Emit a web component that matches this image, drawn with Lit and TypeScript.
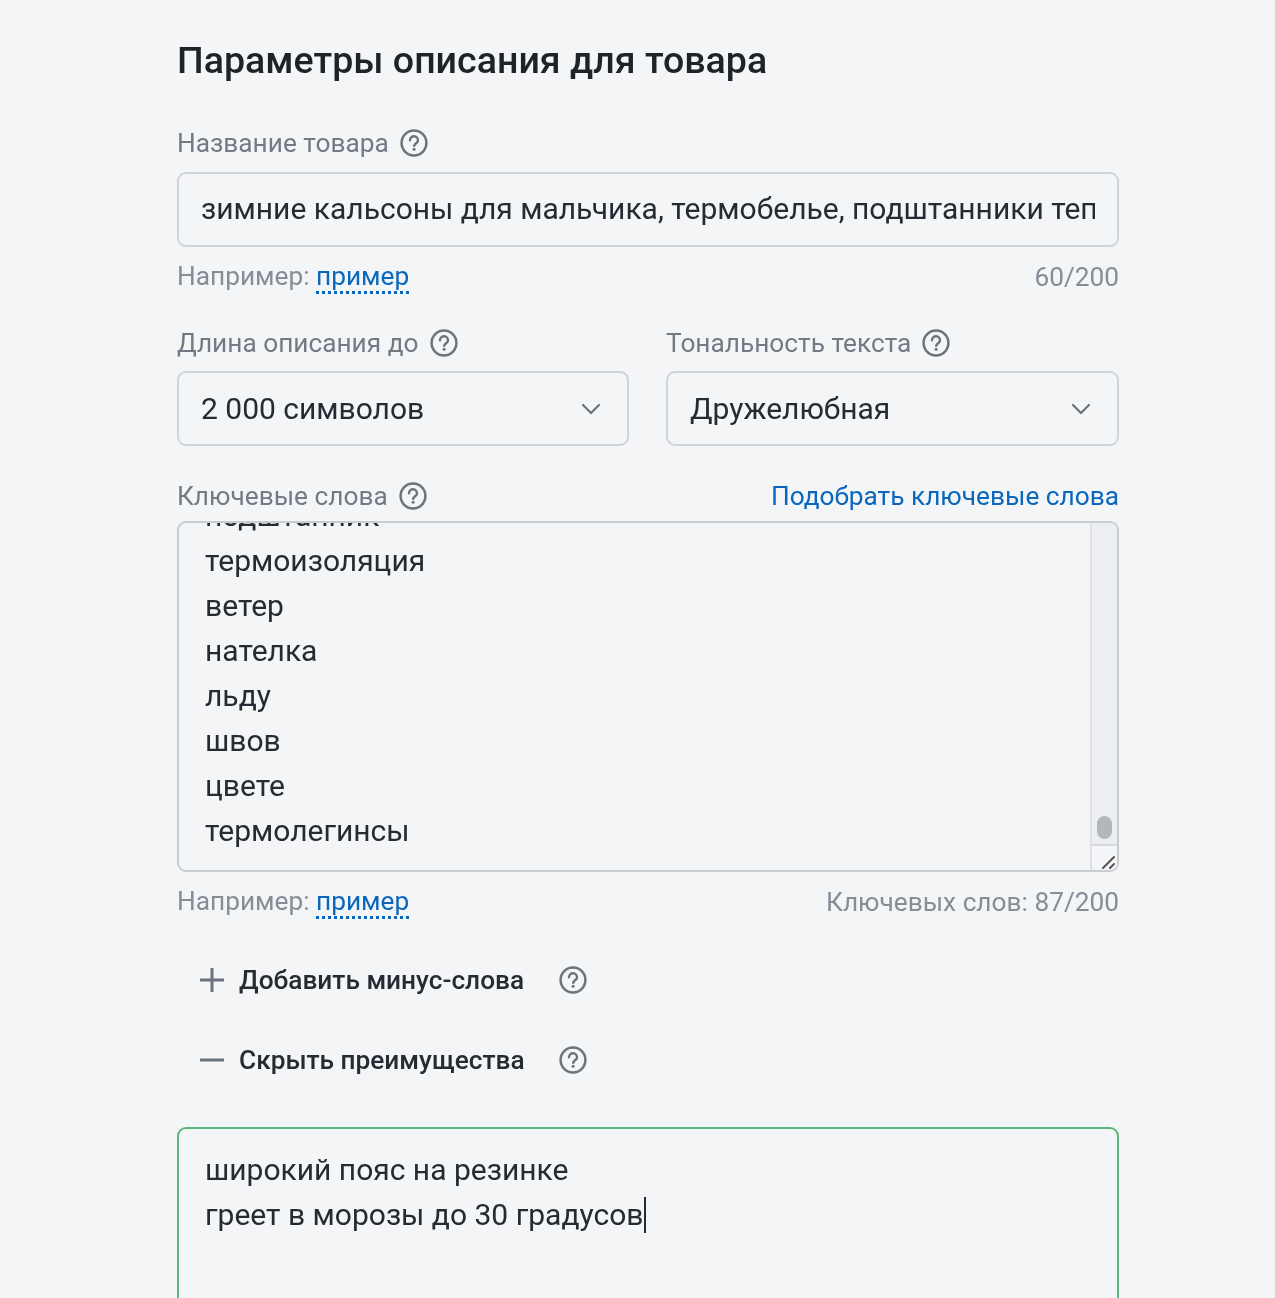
import { LitElement, html, css, svg } from "lit";
import { customElement } from "lit/decorators.js";

const help = html`<svg class="help" viewBox="0 0 28 28" fill="none">
  <circle cx="14" cy="14" r="12.4" stroke="#6b747d" stroke-width="2.5"></circle>
  ${svg`<path d="M10 11.2a4 4 0 0 1 8 .2c0 2.6-3.6 2.9-3.8 5.4" stroke="#6b747d" stroke-width="2.4" stroke-linecap="round"></path>
  <circle cx="14.1" cy="20.3" r="1.5" fill="#6b747d"></circle>`}
</svg>`;

const chevron = html`<svg class="chev" viewBox="0 0 20 12" fill="none"><path d="M2 2l8 8 8-8" stroke="#6b747d" stroke-width="2.2" stroke-linecap="round" stroke-linejoin="round"></path></svg>`;

const keywords = ["подштанник", "термоизоляция", "ветер", "нателка", "льду", "швов", "цвете", "термолегинсы"];

@customElement("app-root")
export class AppRoot extends LitElement {
  static styles = css`
    :host {
      display: block;
      height: 1298px;
      overflow: hidden;
      background: #f3f5f7;
      font-family: Roboto, "Noto Sans", sans-serif;
      color: #262b33;
    }
    .page {
      width: 942px;
      margin-left: 177px;
      padding-top: 38px;
      display: flex;
      flex-direction: column;
      filter: blur(0.45px);
    }
    h1 {
      margin: 0 0 40px;
      font-size: 37.6px;
      line-height: 45px;
      font-weight: 500;
      color: #1f2329;
    }
    .label {
      display: flex;
      align-items: center;
      gap: 11px;
      height: 40px;
      font-size: 26.25px;
      color: #727b85;
      white-space: nowrap;
    }
    .help { width: 28px; height: 28px; flex: none; }
    .field {
      box-sizing: border-box;
      height: 75px;
      border: 2px solid #d0d3d9;
      border-radius: 9px;
      padding: 0 22px 2px;
      display: flex;
      align-items: center;
      font-size: 30px;
      white-space: nowrap;
      overflow: hidden;
      margin-top: 9px;
    }
    .field span { overflow: hidden; }
    .hint-row {
      display: flex;
      justify-content: space-between;
      align-items: center;
      height: 40px;
      margin-top: 10px;
      font-size: 26.25px;
      color: #858d96;
    }
    .sample {
      color: #0b66bd;
      border-bottom: 3px dotted #0b66bd;
      line-height: 30px;
      display: inline-block;
    }
    .cols {
      display: grid;
      grid-template-columns: 452px 453px;
      justify-content: space-between;
      margin-top: 26px;
    }
    .select { justify-content: space-between; padding: 0 26px 0 22px; margin-top: 8px; }
    .chev { width: 20px; height: 12px; }
    .kw-head {
      display: flex;
      justify-content: space-between;
      align-items: center;
      margin-top: 30px;
    }
    .kw-head a { color: #0b66bd; font-size: 26.25px; }
    .kw-box {
      box-sizing: border-box;
      height: 351px;
      margin-top: 5px;
      border: 2px solid #c9ccd1;
      border-radius: 9px;
      display: flex;
      overflow: hidden;
    }
    .kw-list {
      flex: 1;
      overflow: hidden;
      padding-left: 26px;
      font-size: 30px;
      line-height: 45px;
    }
    .kw-list div:first-child { margin-top: -30px; }
    .bar {
      width: 25px;
      border-left: 2px solid #dfe1e4;
      background: #eceef0;
      display: flex;
      flex-direction: column;
      justify-content: flex-end;
      align-items: center;
    }
    .thumb {
      width: 15px;
      height: 23px;
      border-radius: 8px;
      background: #b4b7ba;
      margin-bottom: 5px;
    }
    .corner {
      box-sizing: border-box;
      width: 100%;
      height: 26px;
      border-top: 2px solid #d6d8db;
      background: #f3f5f7;
      display: flex;
      align-items: flex-end;
      justify-content: flex-end;
    }
    .corner svg { width: 16px; height: 16px; }
    .action {
      display: flex;
      align-items: center;
      height: 40px;
      padding-left: 22px;
      font-size: 26.25px;
      font-weight: 500;
      color: #262b33;
      white-space: nowrap;
    }
    .action svg.sign { width: 26px; height: 26px; margin-right: 14px; flex: none; }
    .action .help { margin-left: 35px; }
    .a1 { margin-top: 38px; }
    .a2 { margin-top: 40px; }
    .a2 .help { margin-left: 34px; }
    .benefits {
      box-sizing: border-box;
      height: 300px;
      margin-top: 47px;
      border: 2px solid #5cb87a;
      border-radius: 9px;
      padding: 18px 26px;
      font-size: 30px;
      line-height: 45px;
    }
    .caret {
      display: inline-block;
      width: 2px;
      height: 36px;
      background: #262b33;
      vertical-align: -8px;
    }
  `;

  render() {
    return html`<div class="page">
      <h1>Параметры описания для товара</h1>

      <div class="label">Название товара ${help}</div>
      <div class="field"><span>зимние кальсоны для мальчика, термобелье, подштанники теплые</span></div>
      <div class="hint-row"><div>Например: <span class="sample">пример</span></div><div>60/200</div></div>

      <div class="cols">
        <div>
          <div class="label">Длина описания до ${help}</div>
          <div class="field select"><span>2 000 символов</span>${chevron}</div>
        </div>
        <div>
          <div class="label">Тональность текста ${help}</div>
          <div class="field select"><span>Дружелюбная</span>${chevron}</div>
        </div>
      </div>

      <div class="kw-head">
        <div class="label">Ключевые слова ${help}</div>
        <a>Подобрать ключевые слова</a>
      </div>
      <div class="kw-box">
        <div class="kw-list">${keywords.map((k) => html`<div>${k}</div>`)}</div>
        <div class="bar">
          <div class="thumb"></div>
          <div class="corner">
            <svg viewBox="0 0 16 16" fill="none" stroke="#555" stroke-width="2" stroke-linecap="round">
              <path d="M2 14L13 3M9 14l4-4"></path>
            </svg>
          </div>
        </div>
      </div>
      <div class="hint-row"><div>Например: <span class="sample">пример</span></div><div>Ключевых слов: 87/200</div></div>

      <div class="action a1">
        <svg class="sign" viewBox="0 0 26 26"><path d="M13 1v24M1 13h24" stroke="#6b747d" stroke-width="3" fill="none"></path></svg>
        Добавить минус-слова ${help}
      </div>
      <div class="action a2">
        <svg class="sign" viewBox="0 0 26 26"><path d="M1 13h24" stroke="#6b747d" stroke-width="3" fill="none"></path></svg>
        Скрыть преимущества ${help}
      </div>

      <div class="benefits">
        <div>широкий пояс на резинке</div>
        <div>греет в морозы до 30 градусов<span class="caret"></span></div>
      </div>
    </div>`;
  }
}
